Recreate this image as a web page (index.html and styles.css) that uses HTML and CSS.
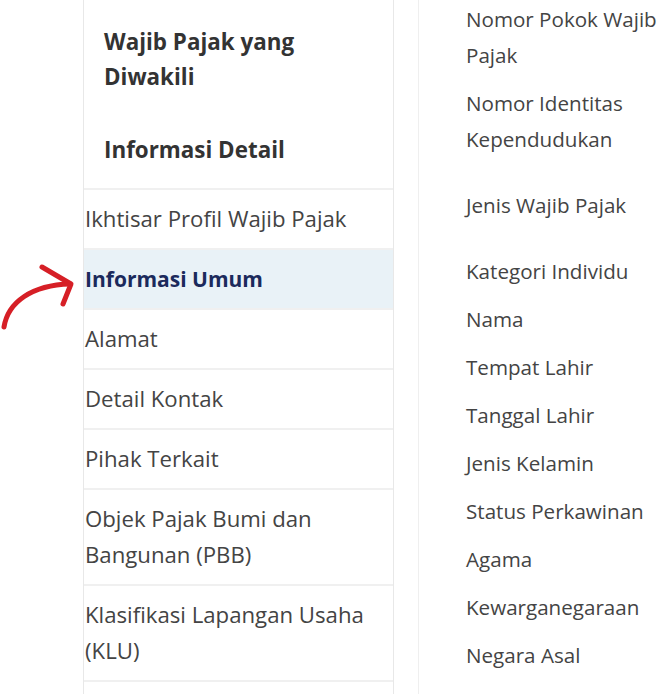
FILE: index.html
```html
<!DOCTYPE html>
<html lang="id">

<head>
    <meta charset="UTF-8">
    <meta name="viewport" content="width=device-width, initial-scale=1.0">
    <title>Informasi Umum</title>
    <link rel="stylesheet" href="styles.css">
</head>

<body>
    <div class="page">
        <!-- Menu samping -->
        <div class="sidebar">
            <div class="sidebar-head">
                <h3>Wajib Pajak yang Diwakili</h3>
                <h3 class="sub">Informasi Detail</h3>
            </div>
            <ul class="menu">
                <li>Ikhtisar Profil Wajib Pajak</li>
                <li class="active">Informasi Umum</li>
                <li>Alamat</li>
                <li>Detail Kontak</li>
                <li>Pihak Terkait</li>
                <li>Objek Pajak Bumi dan Bangunan (PBB)</li>
                <li>Klasifikasi Lapangan Usaha (KLU)</li>
            </ul>
        </div>

        <!-- Label data -->
        <div class="detail">
            <ul class="fields">
                <li>Nomor Pokok Wajib Pajak</li>
                <li class="tall">Nomor Identitas Kependudukan</li>
                <li class="tall">Jenis Wajib Pajak</li>
                <li>Kategori Individu</li>
                <li>Nama</li>
                <li>Tempat Lahir</li>
                <li>Tanggal Lahir</li>
                <li>Jenis Kelamin</li>
                <li>Status Perkawinan</li>
                <li>Agama</li>
                <li>Kewarganegaraan</li>
                <li>Negara Asal</li>
                <li>Bahasa yang dipilih</li>
            </ul>
        </div>

        <svg class="arrow" width="80" height="70" viewBox="0 260 80 70">
            <path d="M4 327 C 8 302, 32 285, 70 284" />
            <path d="M42 267 L 71 284 L 63 304" />
        </svg>
    </div>
</body>

</html>
```

FILE: styles.css
```css
/* General styles */
body {
    font-family: "Open Sans", "Noto Sans", Arial, sans-serif;
    background-color: #fff;
    color: #444;
    margin: 0;
    overflow: hidden;
}

.page {
    position: relative;
    display: flex;
    padding-left: 83px;
    height: 694px;
}

ul {
    list-style: none;
    margin: 0;
    padding: 0;
}

/* Menu samping */
.sidebar {
    width: 309px;
    border-left: 1px solid #e8e8e8;
    border-right: 1px solid #e8e8e8;
    flex-shrink: 0;
}

.sidebar-head {
    padding: 24px 20px 21px 20px;
}

.sidebar-head h3 {
    margin: 0;
    font-size: 22.4px;
    line-height: 35px;
    font-weight: 700;
    color: #333;
}

.sidebar-head h3.sub {
    margin-top: 38px;
}

.menu {
    border-bottom: 2px solid #f0f0f0;
}

.menu li {
    border-top: 2px solid #f0f0f0;
    padding: 11px 20px 11px 1px;
    font-size: 22.2px;
    line-height: 36px;
    color: #444;
}

.menu li.active {
    background-color: #e9f2f7;
    color: #1b2a5c;
    font-weight: 700;
    font-size: 21px;
}

/* Label data */
.detail {
    margin-left: 24px;
    border-left: 1px solid #efefef;
    padding-left: 47px;
    flex: 1;
}

.fields {
    padding-top: 1px;
}

.fields li {
    font-size: 20.6px;
    line-height: 36px;
    margin-bottom: 12px;
    color: #444;
}

.fields li.tall {
    margin-bottom: 30px;
}

/* Panah */
.arrow {
    position: absolute;
    left: 0;
    top: 260px;
}

.arrow path {
    fill: none;
    stroke: #d61f26;
    stroke-width: 5;
    stroke-linecap: round;
    stroke-linejoin: round;
}
```
